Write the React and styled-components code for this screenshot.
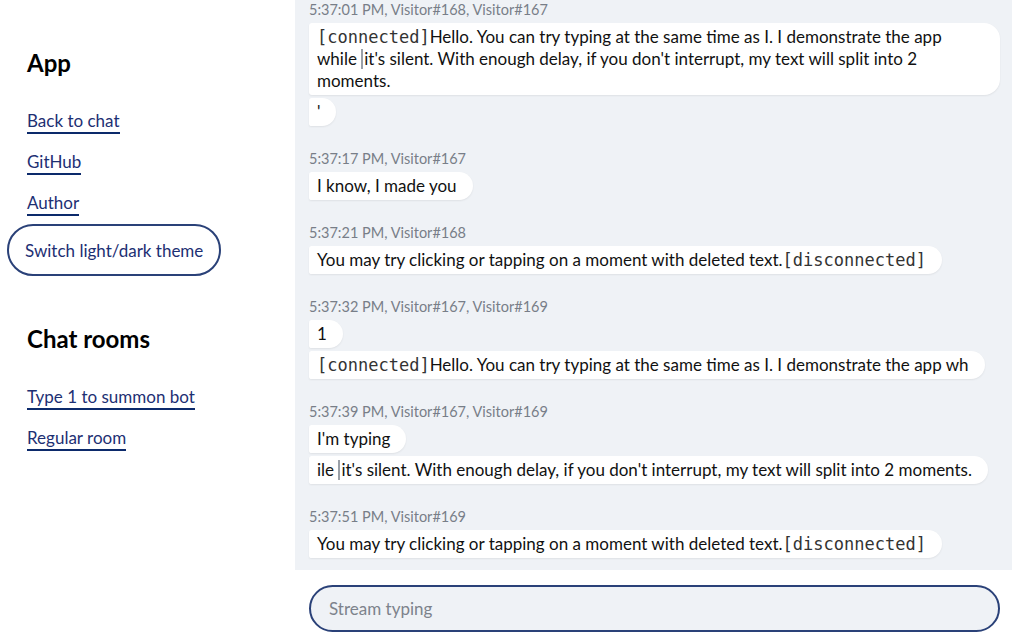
import React from 'react';
import styled, { createGlobalStyle } from 'styled-components';

const GlobalStyle = createGlobalStyle`
	html, body, #root {
		margin: 0;
		height: 100%;
	}
	body {
		font-family: Lato, "Noto Sans", sans-serif;
		color: #111;
		background: #fff;
	}
	* {
		box-sizing: border-box;
	}
`;

const groups = [
	{
		meta: '5:37:01 PM, Visitor#168, Visitor#167',
		moments: [
			{ tag: 'connected', text: "Hello. You can try typing at the same time as I. I demonstrate the app while ", caret: true, rest: "it's silent. With enough delay, if you don't interrupt, my text will split into 2 moments." },
			{ text: "'" },
		],
	},
	{
		meta: '5:37:17 PM, Visitor#167',
		moments: [{ text: 'I know, I made you' }],
	},
	{
		meta: '5:37:21 PM, Visitor#168',
		moments: [{ text: 'You may try clicking or tapping on a moment with deleted text.', tagEnd: 'disconnected' }],
	},
	{
		meta: '5:37:32 PM, Visitor#167, Visitor#169',
		moments: [
			{ text: '1' },
			{ tag: 'connected', text: 'Hello. You can try typing at the same time as I. I demonstrate the app wh' },
		],
	},
	{
		meta: '5:37:39 PM, Visitor#167, Visitor#169',
		moments: [
			{ text: "I'm typing" },
			{ text: 'ile ', caret: true, rest: "it's silent. With enough delay, if you don't interrupt, my text will split into 2 moments." },
		],
	},
	{
		meta: '5:37:51 PM, Visitor#169',
		moments: [{ text: 'You may try clicking or tapping on a moment with deleted text.', tagEnd: 'disconnected' }],
	},
];

export default function App() {
	return (
		<Page>
			<GlobalStyle />
			<Sidebar>
				<Heading>App</Heading>
				<LinkList>
					<NavLink href="#">Back to chat</NavLink>
					<NavLink href="#">GitHub</NavLink>
					<NavLink href="#">Author</NavLink>
				</LinkList>
				<ThemeButton>Switch light/dark theme</ThemeButton>

				<Heading second>Chat rooms</Heading>
				<LinkList>
					<NavLink href="#">Type 1 to summon bot</NavLink>
					<NavLink href="#">Regular room</NavLink>
				</LinkList>
			</Sidebar>

			<Main>
				<Messages>
					{groups.map((g, i) => (
						<Group key={i}>
							<Meta>{g.meta}</Meta>
							{g.moments.map((m, j) => (
								<Bubble key={j}>
									{m.tag && <Code>[{m.tag}]</Code>}
									{m.text}
									{m.caret && <Caret />}
									{m.rest}
									{m.tagEnd && <Code>[{m.tagEnd}]</Code>}
								</Bubble>
							))}
						</Group>
					))}
				</Messages>
				<Composer>
					<Input placeholder="Stream typing" />
				</Composer>
			</Main>
		</Page>
	);
}

const Page = styled.div`
	display: flex;
	height: 100vh;
	overflow: hidden;
`;

const Sidebar = styled.nav`
	width: 295px;
	flex-shrink: 0;
	padding: 48px 0 0 27px;
	display: flex;
	flex-direction: column;
	align-items: flex-start;
`;

const Heading = styled.h2`
	margin: ${(p) => (p.second ? '48px' : '0')} 0 32px;
	font-size: 24px;
	line-height: 30px;
	font-weight: 700;
	color: #000;
`;

const LinkList = styled.div`
	display: flex;
	flex-direction: column;
	align-items: flex-start;
	gap: 17px;
`;

const NavLink = styled.a`
	font-size: 17px;
	line-height: 22px;
	color: #1d2f73;
	text-decoration: none;
	border-bottom: 2px solid #0c2a6b;
`;

const ThemeButton = styled.button`
	margin: 8px 0 0 -20px;
	height: 52px;
	padding: 0 16px;
	border: 2px solid #2a4178;
	border-radius: 26px;
	background: #fff;
	color: #1d2f73;
	font-family: inherit;
	font-size: 17px;
	cursor: pointer;
`;

const Main = styled.main`
	flex: 1;
	min-width: 0;
	display: flex;
	flex-direction: column;
	background: #eff2f6;
`;

const Messages = styled.div`
	flex: 1;
	min-height: 0;
	overflow: hidden;
	display: flex;
	flex-direction: column;
	justify-content: flex-end;
	gap: 24px;
	padding: 0 12px 12px 14px;
`;

const Group = styled.div`
	display: flex;
	flex-direction: column;
	align-items: flex-start;
	gap: 3px;
`;

const Meta = styled.div`
	font-size: 14.5px;
	line-height: 18px;
	color: #787e88;
	margin-bottom: 1px;
`;

const Bubble = styled.div`
	max-width: 100%;
	padding: 3px 16px 3px 8px;
	font-size: 17px;
	line-height: 22px;
	background: #fff;
	border-radius: 3px 16px 16px 3px;
	box-shadow: 0 1px 2px rgba(0, 0, 0, 0.07);
`;

const Code = styled.span`
	font-family: "DejaVu Sans Mono", monospace;
	font-size: 17px;
	line-height: 1;
	color: #333;
`;

const Caret = styled.span`
	display: inline-block;
	width: 2px;
	height: 20px;
	margin-right: 1px;
	vertical-align: -4px;
	background: #9aa0a8;
`;

const Composer = styled.div`
	background: #fff;
	padding: 15px 12px 10px 14px;
`;

const Input = styled.input`
	display: block;
	width: 100%;
	height: 47px;
	padding: 0 18px;
	border: 2px solid #2a4178;
	border-radius: 24px;
	background: #eff2f6;
	font-family: inherit;
	font-size: 17px;
	color: #111;
	outline: none;

	&::placeholder {
		color: #7d838c;
	}
`;
